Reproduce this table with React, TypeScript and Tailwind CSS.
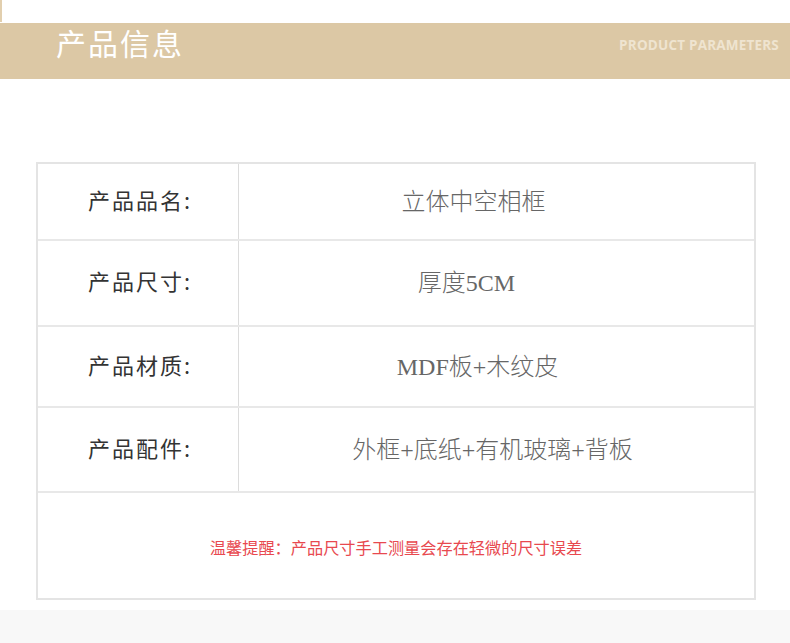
import React from "react";

const rows: { label: string; value: string; h: string; pr: string }[] = [
  { label: "产品品名:", value: "立体中空相框", h: "h-[77px]", pr: "pr-[46px]" },
  { label: "产品尺寸:", value: "厚度5CM", h: "h-[86px]", pr: "pr-[60px]" },
  { label: "产品材质:", value: "MDF板+木纹皮", h: "h-[81px]", pr: "pr-[38px]" },
  { label: "产品配件:", value: "外框+底纸+有机玻璃+背板", h: "h-[85px]", pr: "pr-[8px]" },
];

export default function App() {
  return (
    <div className="w-[790px] h-[643px] bg-white relative overflow-hidden" style={{ fontFamily: '"Noto Sans", "Noto Sans CJK SC", sans-serif' }}>
      <div className="absolute left-0 top-0 w-[2px] h-[22px] bg-[#e2cfae]" />
      <div className="h-[23px]" />
      <div className="h-[56px] bg-[#dcc8a5] flex items-center justify-between pl-[56px] pr-[11px]">
        <div className="text-white text-[30px] leading-none tracking-[2px] pb-[18px]" style={{ fontFamily: '"Noto Sans CJK SC", sans-serif' }}>产品信息</div>
        <div className="text-[#efe4d0] text-[13.5px] font-bold tracking-[0.2px] pb-[12px]" style={{ fontFamily: '"Open Sans", sans-serif' }}>PRODUCT PARAMETERS</div>
      </div>
      <div className="h-[83px]" />
      <div className="ml-[36px] w-[720px] border-2 border-[#e4e4e4] flex flex-col">
        {rows.map((r, i) => (
          <div key={i} className={`flex ${r.h} border-b-2 border-[#e8e8e8]`}>
            <div className="w-[201px] border-r border-[#dcdcdc] flex items-center justify-center">
              <span className="text-[22px] text-[#333] tracking-[2px] pb-[5px] pl-[4px]" style={{ fontFamily: '"Noto Sans CJK SC", sans-serif' }}>{r.label}</span>
            </div>
            <div className={`flex-1 flex items-center justify-center ${r.pr}`}>
              <span className="text-[24px] text-[#666] font-light" style={{ fontFamily: '"Liberation Serif", "Noto Sans CJK SC", serif' }}>{r.value}</span>
            </div>
          </div>
        ))}
        <div className="h-[105px] flex items-center justify-center">
          <span className="text-[16.2px] text-[#e8494f] pt-[4px]" style={{ fontFamily: '"Noto Sans CJK SC", sans-serif' }}>温馨提醒：产品尺寸手工测量会存在轻微的尺寸误差</span>
        </div>
      </div>
      <div className="absolute left-0 right-0 bottom-0 h-[33px] bg-[#f8f8f8]" />
    </div>
  );
}
